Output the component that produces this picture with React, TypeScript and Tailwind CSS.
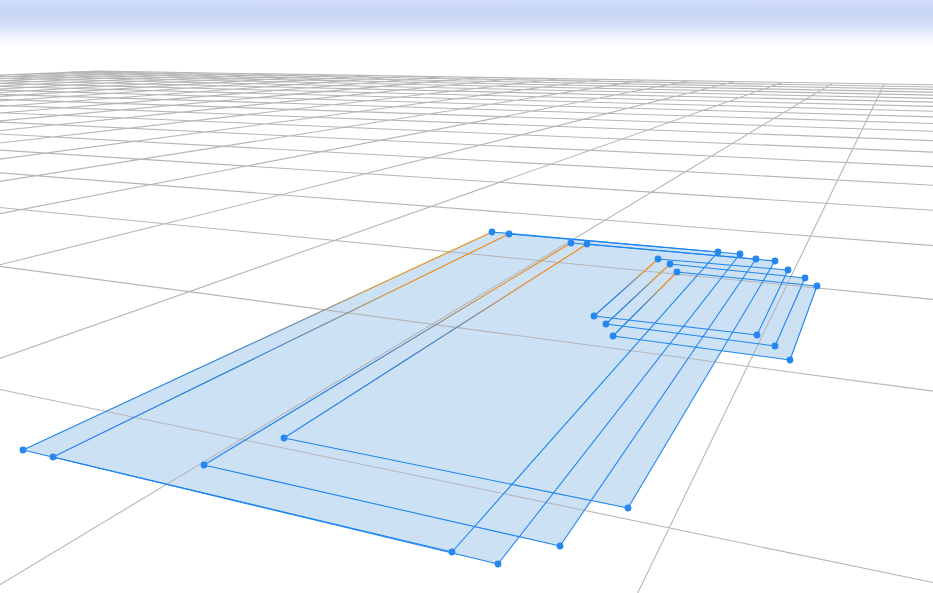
type Pt = [number, number];

const VP_A: Pt = [-1680, 42];
const VP_B: Pt = [906, 39];

// quads: top-left, top-right, bottom-right, bottom-left
const quads: [Pt, Pt, Pt, Pt][] = [
  [[492, 232], [718, 252], [452, 552], [23, 450]],
  [[509, 234], [740, 254], [498, 564], [53, 457]],
  [[571, 243], [756, 259], [560, 546], [204, 465]],
  [[587, 244], [775, 261], [628, 508], [284, 438]],
  [[658, 259], [788, 270], [757, 335], [594, 316]],
  [[670, 264], [805, 278], [775, 346], [606, 324]],
  [[677, 272], [817, 286], [790, 360], [613, 336]],
];

const lineA = (k: number): [Pt, Pt] => [VP_A, [933, 39 + 1 / (0.00184 + 0.001 * k)]];
const lineB = (j: number): [Pt, Pt] => [VP_B, [829 - 187 * j, 198]];

const meet = ([a, b]: [Pt, Pt], [c, d]: [Pt, Pt]): Pt => {
  const d1x = b[0] - a[0];
  const d1y = b[1] - a[1];
  const d2x = d[0] - c[0];
  const d2y = d[1] - c[1];
  const t = ((c[0] - a[0]) * d2y - (c[1] - a[1]) * d2x) / (d1x * d2y - d1y * d2x);
  return [a[0] + d1x * t, a[1] + d1y * t];
};

const FAR_A = 20;
const LEFT_B = 21;

const Grid = () => {
  const rows = Array.from({ length: FAR_A + 1 }, (_, k) => {
    const line = lineA(k);
    const start = meet(line, lineB(LEFT_B));
    const end = line[1];
    return `M${start[0].toFixed(1)} ${start[1].toFixed(1)}L${end[0].toFixed(1)} ${end[1].toFixed(1)}`;
  });
  const cols = Array.from({ length: LEFT_B + 1 }, (_, j) => {
    const line = lineB(j);
    const start = meet(line, lineA(FAR_A));
    // run the line on past the bottom of the picture
    const t = (700 - VP_B[1]) / (198 - VP_B[1]);
    const endX = VP_B[0] + (line[1][0] - VP_B[0]) * t;
    return `M${start[0].toFixed(1)} ${start[1].toFixed(1)}L${endX.toFixed(1)} 700`;
  });
  return <path d={[...rows, ...cols].join("")} fill="none" stroke="#b4b6b8" strokeWidth={1.1} />;
};

export default function App() {
  return (
    <div className="relative h-[593px] w-[933px] overflow-hidden bg-white">
      <div className="h-[46px] w-full bg-[linear-gradient(to_bottom,#d2defc_0%,#c6d5f3_28%,#d5e0f8_55%,#eff3fd_80%,#ffffff_100%)]" />
      <svg className="absolute inset-0" width={933} height={593} viewBox="0 0 933 593">
        <defs>
          <linearGradient id="edge" x1="1" y1="0" x2="0" y2="1">
            <stop offset="0" stopColor="#f08c10" />
            <stop offset="0.24" stopColor="#e0922c" />
            <stop offset="0.4" stopColor="#6f8aa4" />
            <stop offset="0.6" stopColor="#2a80dc" />
            <stop offset="1" stopColor="#1f86f0" />
          </linearGradient>
        </defs>
        {quads.map((q, i) => (
          <polygon key={i} points={q.map((p) => p.join(",")).join(" ")} fill="#cde1f5" />
        ))}
        <Grid />
        {quads.map(([tl, tr, br, bl], i) => (
          <g key={i} fill="none">
            <line x1={tr[0]} y1={tr[1]} x2={br[0]} y2={br[1]} stroke="#1f86f0" strokeWidth={1.1} />
            <line x1={bl[0]} y1={bl[1]} x2={br[0]} y2={br[1]} stroke="#1f86f0" strokeWidth={1.1} />
            <line x1={tl[0]} y1={tl[1]} x2={tr[0]} y2={tr[1]} stroke="#1f86f0" strokeWidth={1.1} />
            <line x1={tl[0]} y1={tl[1]} x2={bl[0]} y2={bl[1]} stroke="url(#edge)" strokeWidth={1.2} />
          </g>
        ))}
        {quads.flat().map((p, i) => (
          <circle key={i} cx={p[0]} cy={p[1]} r={3.4} fill="#2687f0" />
        ))}
      </svg>
    </div>
  );
}
